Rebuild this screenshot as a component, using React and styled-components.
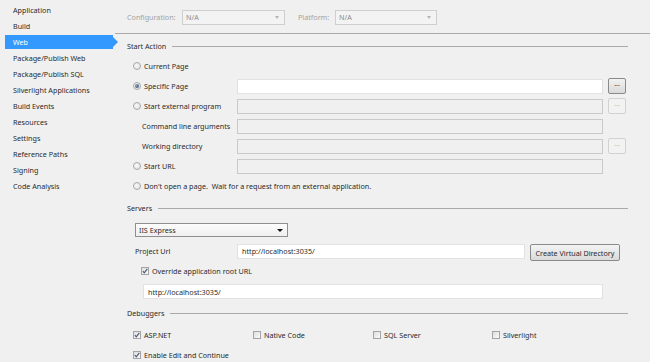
import React from 'react'
import styled, { createGlobalStyle } from 'styled-components'

const GlobalStyle = createGlobalStyle`
  html, body {
    margin: 0;
    padding: 0;
    background: #F0F0F0;
  }
  body {
    font-family: "Noto Sans", "Open Sans", sans-serif;
    font-size: 7.2px;
    color: #2a2a2a;
  }
`

const Page = styled.div`
  width: 650px;
  height: 362px;
  display: flex;
  overflow: hidden;
  background: #F0F0F0;
`

const Sidebar = styled.div`
  width: 118px;
  flex-shrink: 0;
  padding-top: 3px;
  display: flex;
  flex-direction: column;
  gap: 2px;
  position: relative;
  z-index: 1;
`

const NavItem = styled.div`
  height: 14px;
  line-height: 14px;
  margin-left: 5px;
  width: 108px;
  padding-left: 8px;
  box-sizing: border-box;
  position: relative;
  white-space: nowrap;
  background: ${p => (p.$active ? '#3399FF' : 'transparent')};
  color: ${p => (p.$active ? '#fff' : '#2a2a2a')};

  &::after {
    content: '';
    display: ${p => (p.$active ? 'block' : 'none')};
    position: absolute;
    right: -5px;
    top: 2px;
    border-top: 5px solid transparent;
    border-bottom: 5px solid transparent;
    border-left: 5px solid #3399FF;
  }
`

const Main = styled.div`
  flex: 1;
  display: flex;
  flex-direction: column;
  margin-left: -3px;

  & > * {
    flex-shrink: 0;
  }
`

const TopBar = styled.div`
  height: 32px;
  padding-top: 1px;
  border-bottom: 1px solid #a9a9a9;
  display: grid;
  grid-template-columns: 50px 111px 32px 102px;
  column-gap: 5px;
  align-items: center;
  padding-left: 12px;
`

const DimLabel = styled.span`
  color: #a3a3a3;
`

const DimSelect = styled.div`
  width: ${p => p.$w}px;
  height: 15px;
  box-sizing: border-box;
  border: 1px solid #cfcfcf;
  background: #f3f3f3;
  color: #8a8a8a;
  display: flex;
  align-items: center;
  justify-content: space-between;
  padding: 0 5px 0 3px;

  &::after {
    content: '';
    border-left: 2.5px solid transparent;
    border-right: 2.5px solid transparent;
    border-top: 3px solid #b5b5b5;
  }
`

const Section = styled.div`
  padding-left: 12px;
  padding-right: 22px;
  margin-top: ${p => p.$top}px;
`

const Header = styled.div`
  height: 12px;
  display: flex;
  align-items: center;
  gap: 6px;
  white-space: nowrap;

  &::after {
    content: '';
    flex: 1;
    height: 1px;
    background: #a9a9a9;
  }
`

const RowGrid = styled.div`
  margin-top: 4px;
  padding-left: 6px;
  padding-right: 2px;
  display: grid;
  grid-template-columns: 99px 1fr 18px;
  column-gap: 5px;
  grid-auto-rows: 20px;
  align-items: center;
`

const Choice = styled.label`
  display: flex;
  align-items: center;
  gap: 3px;
  white-space: nowrap;
  padding-left: ${p => p.$indent || 0}px;
  grid-column: ${p => (p.$wide ? '1 / -1' : 'auto')};
`

const Radio = styled.span`
  width: 8px;
  height: 8px;
  border-radius: 50%;
  box-sizing: border-box;
  border: 1px solid #a9a9a9;
  background: radial-gradient(circle at 40% 40%, #fafafa, #dcdcdc);
  display: flex;
  align-items: center;
  justify-content: center;

  &::after {
    content: '';
    display: ${p => (p.$on ? 'block' : 'none')};
    width: 4px;
    height: 4px;
    border-radius: 50%;
    background: radial-gradient(circle at 35% 35%, #8ea2c0, #2e3f62);
  }
`

const Field = styled.div`
  height: 15px;
  box-sizing: border-box;
  border: 1px solid ${p => (p.$enabled ? '#e2e2e2' : '#c9c9c9')};
  background: ${p => (p.$enabled ? '#ffffff' : '#f0f0f0')};
  display: flex;
  align-items: center;
  padding-left: 4px;
  white-space: nowrap;
`

const DotsButton = styled.div`
  width: 18px;
  height: 16px;
  box-sizing: border-box;
  border-radius: 2px;
  border: 1px solid ${p => (p.$enabled ? '#8a8a8a' : '#d2d2d2')};
  background: ${p => (p.$enabled ? 'linear-gradient(#f2f2f2, #d9d9d9)' : '#f2f2f2')};
  color: ${p => (p.$enabled ? '#333' : '#b8b8b8')};
  font-size: 7px;
  line-height: 10px;
  text-align: center;
`

const Body = styled.div`
  padding-left: 6px;
  display: flex;
  flex-direction: column;
`

const Dropdown = styled.div`
  margin-top: 9px;
  margin-left: 2px;
  width: 153px;
  height: 14px;
  box-sizing: border-box;
  border: 1px solid #8f8f8f;
  background: linear-gradient(#fdfdfd, #efefef);
  display: flex;
  align-items: center;
  justify-content: space-between;
  padding: 0 4px 0 3px;

  &::after {
    content: '';
    border-left: 3px solid transparent;
    border-right: 3px solid transparent;
    border-top: 3px solid #111;
  }
`

const UrlRow = styled.div`
  margin-top: 4px;
  padding-left: 2px;
  height: 20px;
  display: grid;
  grid-template-columns: 97px 288px 90px;
  column-gap: 5px;
  align-items: center;
`

const PushButton = styled.div`
  height: 17px;
  margin-top: 3px;
  box-sizing: border-box;
  border: 1px solid #8a8a8a;
  border-radius: 2px;
  background: linear-gradient(#f4f4f4, #dadada);
  display: flex;
  align-items: center;
  justify-content: center;
  white-space: nowrap;
`

const CheckLine = styled.label`
  height: 20px;
  display: flex;
  align-items: center;
  gap: 3px;
  padding-left: ${p => p.$indent || 0}px;
`

const RootField = styled(Field)`
  margin-top: 3px;
  margin-left: 10px;
  margin-right: 25px;
`

const DebugGrid = styled.div`
  margin-top: 6px;
  padding-left: 18px;
  display: grid;
  grid-template-columns: 120px 120px 119px auto;
  grid-auto-rows: 20px;
  align-items: center;
`

const Box = styled.span`
  width: 8px;
  height: 8px;
  box-sizing: border-box;
  border: 1px solid #a4a4a4;
  background: linear-gradient(135deg, #dedede, #fafafa);
  display: flex;
  align-items: center;
  justify-content: center;
  flex-shrink: 0;
`

function Check({ on }) {
  return (
    <Box>
      {on && (
        <svg width="6" height="6" viewBox="0 0 6 6">
          <path d="M0.8 3.2 L2.3 4.8 L5.3 0.9" fill="none" stroke="#4a5a78" strokeWidth="1.2" />
        </svg>
      )}
    </Box>
  )
}

const navItems = [
  'Application', 'Build', 'Web', 'Package/Publish Web', 'Package/Publish SQL',
  'Silverlight Applications', 'Build Events', 'Resources', 'Settings',
  'Reference Paths', 'Signing', 'Code Analysis'
]

export default function App() {
  return (
    <Page>
      <GlobalStyle />
      <Sidebar>
        {navItems.map(n => (
          <NavItem key={n} $active={n === 'Web'}>{n}</NavItem>
        ))}
      </Sidebar>
      <Main>
        <TopBar>
          <DimLabel>Configuration:</DimLabel>
          <DimSelect $w={103}>N/A</DimSelect>
          <DimLabel>Platform:</DimLabel>
          <DimSelect $w={102}>N/A</DimSelect>
        </TopBar>

        <Section $top={6}>
          <Header>Start Action</Header>
          <RowGrid>
            <Choice $wide><Radio />Current Page</Choice>

            <Choice><Radio $on />Specific Page</Choice>
            <Field $enabled />
            <DotsButton $enabled>...</DotsButton>

            <Choice><Radio />Start external program</Choice>
            <Field />
            <DotsButton>...</DotsButton>

            <Choice $indent={9}>Command line arguments</Choice>
            <Field />
            <span />

            <Choice $indent={9}>Working directory</Choice>
            <Field />
            <DotsButton>...</DotsButton>

            <Choice><Radio />Start URL</Choice>
            <Field />
            <span />

            <Choice $wide><Radio />Don't open a page.&nbsp; Wait for a request from an external application.</Choice>
          </RowGrid>
        </Section>

        <Section $top={6}>
          <Header>Servers</Header>
          <Body>
            <Dropdown>IIS Express</Dropdown>
            <UrlRow>
              <span>Project Url</span>
              <Field $enabled>http://localhost:3035/</Field>
              <PushButton>Create Virtual Directory</PushButton>
            </UrlRow>
            <CheckLine $indent={8}>
              <Check on />
              Override application root URL
            </CheckLine>
            <RootField $enabled>http://localhost:3035/</RootField>
          </Body>
        </Section>

        <Section $top={8}>
          <Header>Debuggers</Header>
        </Section>
        <DebugGrid>
          <Choice><Check on />ASP.NET</Choice>
          <Choice><Check />Native Code</Choice>
          <Choice><Check />SQL Server</Choice>
          <Choice><Check />Silverlight</Choice>
          <Choice $wide><Check on />Enable Edit and Continue</Choice>
        </DebugGrid>
      </Main>
    </Page>
  )
}
